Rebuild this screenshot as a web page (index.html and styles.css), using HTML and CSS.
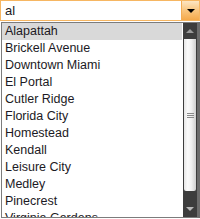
FILE: index.html
```html
<!DOCTYPE html>
<html lang="en">
<head>
  <meta charset="UTF-8">
  <title>Combo box</title>
  <link rel="stylesheet" href="styles.css">
</head>
<body>
  <div class="combo">
    <div class="combo-input">
      <span class="combo-text">al</span>
      <span class="combo-button"><span class="arrow-down"></span></span>
    </div>
    <div class="combo-list">
      <ul class="items">
        <li class="selected">Alapattah</li>
        <li>Brickell Avenue</li>
        <li>Downtown Miami</li>
        <li>El Portal</li>
        <li>Cutler Ridge</li>
        <li>Florida City</li>
        <li>Homestead</li>
        <li>Kendall</li>
        <li>Leisure City</li>
        <li>Medley</li>
        <li>Pinecrest</li>
        <li>Virginia Gardens</li>
      </ul>
      <div class="scrollbar">
        <div class="sb-button"><span class="sb-up"></span></div>
        <div class="sb-thumb"><span class="grip"></span><span class="grip"></span><span class="grip"></span></div>
        <div class="sb-track"></div>
        <div class="sb-button down"><span class="sb-down"></span></div>
      </div>
    </div>
  </div>
</body>
</html>
```

FILE: styles.css
```css
body {
  margin: 0;
  background: #fff;
  font-family: "Liberation Sans", Arial, sans-serif;
  font-size: 12.5px;
  color: #1c1a24;
}
.combo {
  width: 200px;
}
.combo-input {
  display: flex;
  height: 19px;
  border: 1px solid #f6b662;
}
.combo-text {
  flex: 1;
  padding-left: 4px;
  line-height: 19px;
  font-size: 13px;
}
.combo-button {
  width: 17px;
  display: flex;
  align-items: center;
  justify-content: center;
  background: linear-gradient(to bottom, #fde6c3, #f9c57e 50%, #f5a94a);
  border-left: 1px solid #f3ad55;
}
.arrow-down {
  width: 0;
  height: 0;
  border-left: 4px solid transparent;
  border-right: 4px solid transparent;
  border-top: 4px solid #000;
}
.combo-list {
  display: flex;
  margin: 1px 0 0 1px;
  height: 194px;
  border: 1px solid #7c7c7c;
  border-right: 3px solid #6c6c6c;
  overflow: hidden;
}
.items {
  flex: 1;
  list-style: none;
  margin: 0;
  padding: 0;
}
.items li {
  height: 17px;
  line-height: 17px;
  padding-left: 3px;
  white-space: nowrap;
  border-right: 1px solid #fff;
}
.items li.selected {
  background: #d9d9d9;
}
.scrollbar {
  width: 14px;
  display: flex;
  flex-direction: column;
  background: #3d3d3d;
}
.sb-button {
  height: 16px;
  display: flex;
  align-items: center;
  justify-content: center;
}
.sb-button.down {
  height: 17px;
}
.sb-up, .sb-down {
  width: 0;
  height: 0;
  border-left: 4px solid transparent;
  border-right: 4px solid transparent;
}
.sb-up {
  border-bottom: 4px solid #9a9a9a;
}
.sb-down {
  border-top: 4px solid #b8b8b8;
}
.sb-thumb {
  height: 152px;
  margin: 0 1px 0 1px;
  background: linear-gradient(to right, #e6e6e6, #fafafa 30%, #f2f2f2 60%, #cfcfcf);
  border-radius: 0 0 2px 2px;
  display: flex;
  flex-direction: column;
  align-items: center;
  justify-content: center;
  gap: 1px;
}
.grip {
  width: 7px;
  height: 1px;
  background: #8a8a8a;
}
.sb-track {
  flex: 1;
}
```
